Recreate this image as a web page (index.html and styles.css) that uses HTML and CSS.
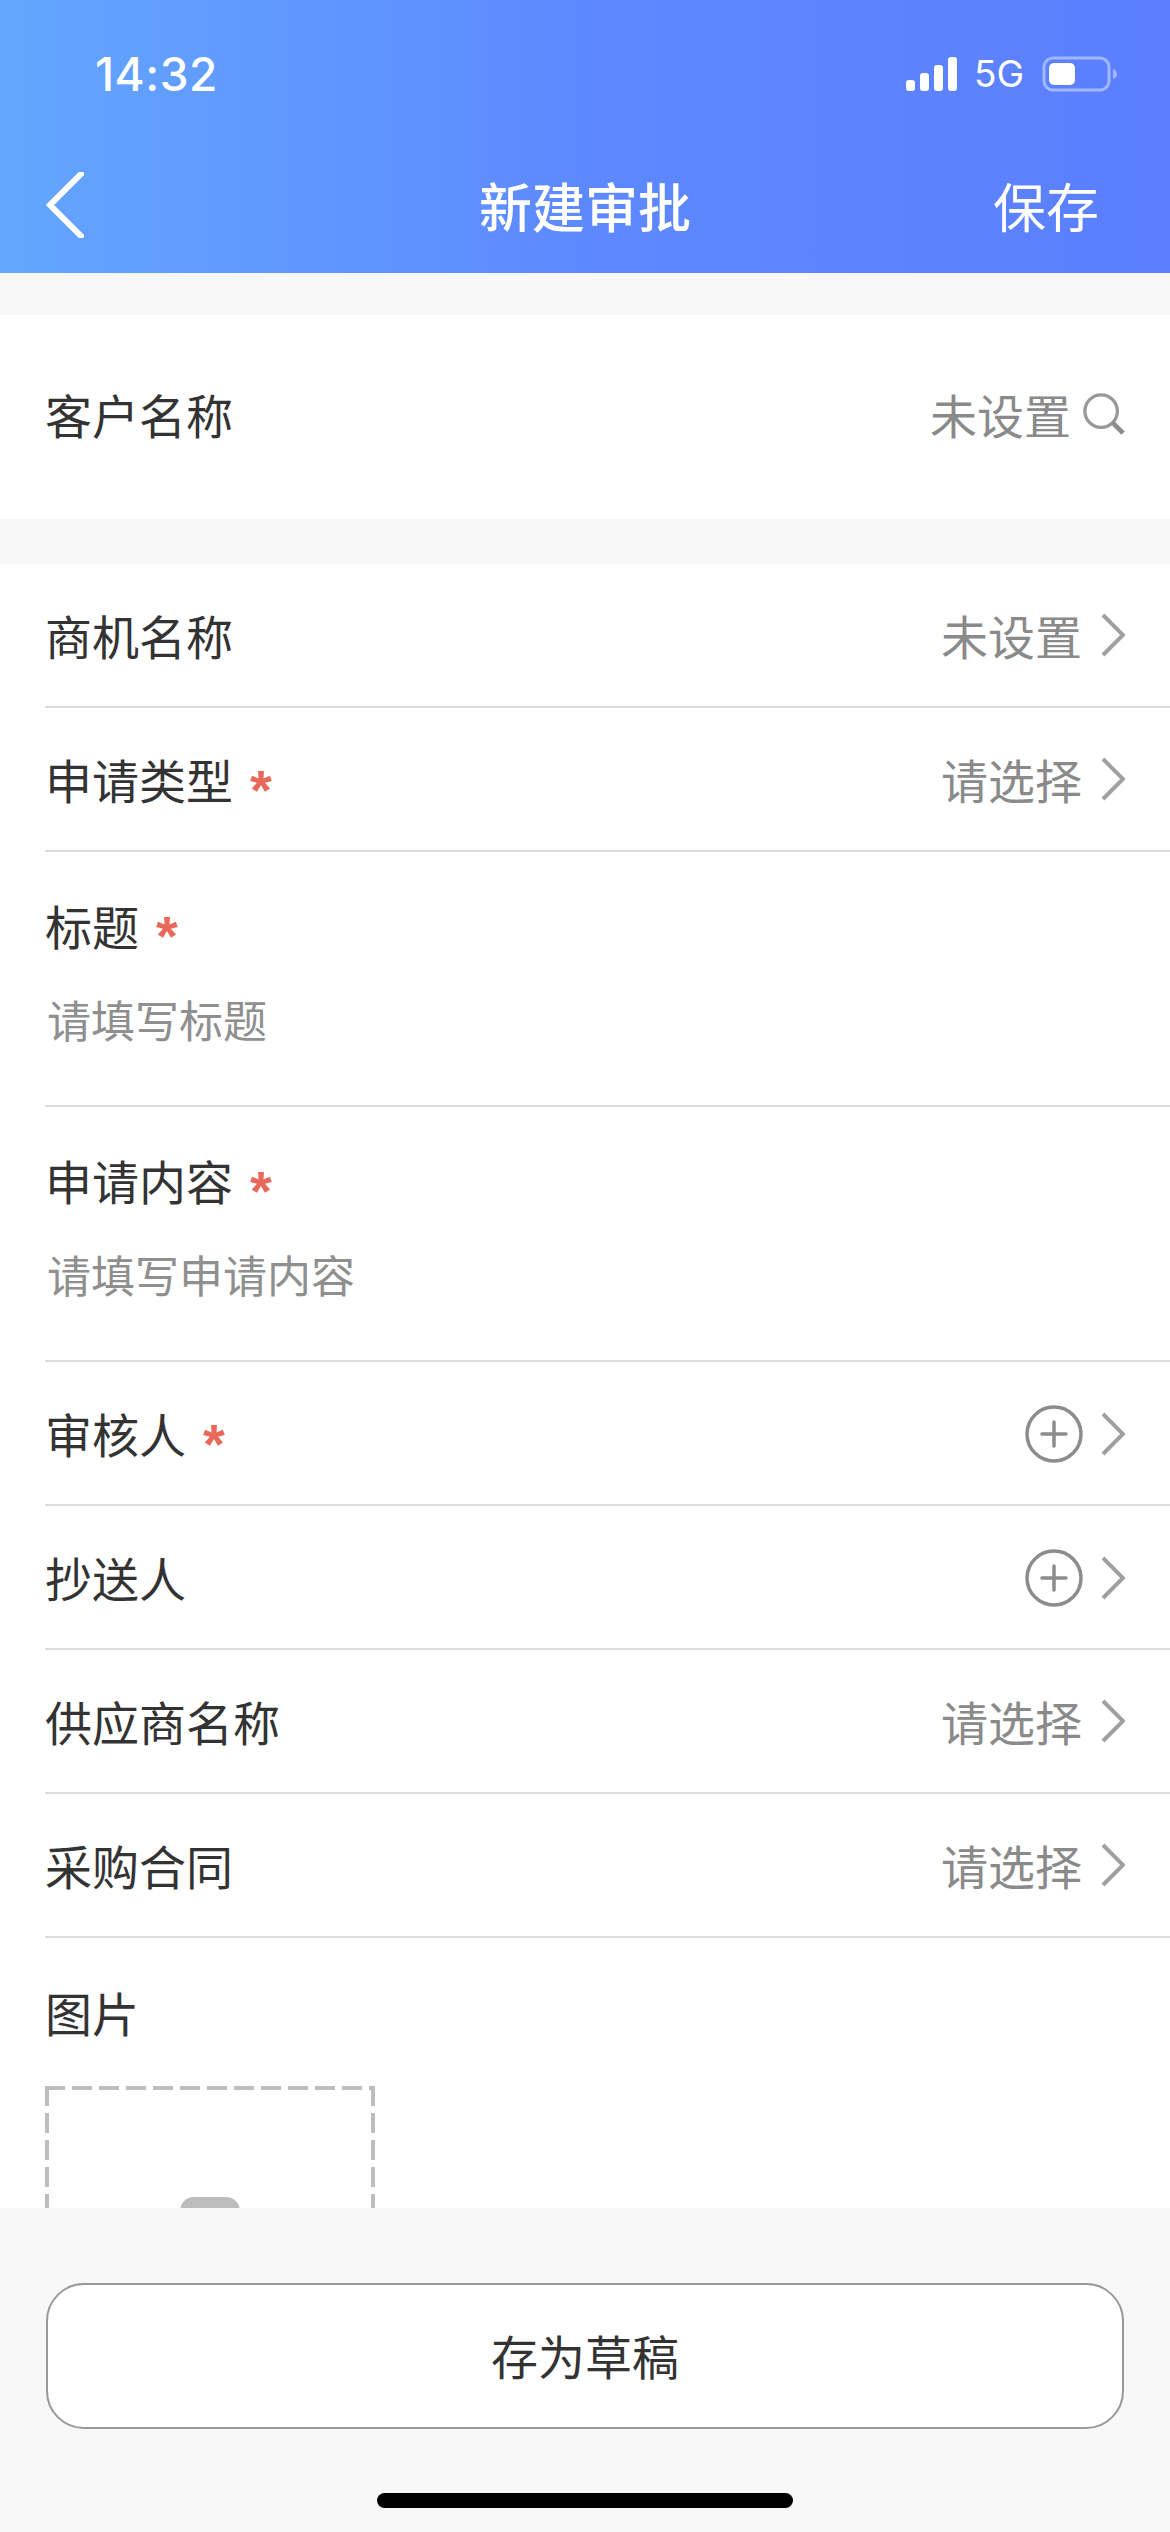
FILE: index.html
```html
<!DOCTYPE html>
<html lang="zh">
<head>
<meta charset="utf-8">
<title>新建审批</title>
<link rel="stylesheet" href="styles.css">
</head>
<body>
<div class="app">
  <header class="header">
    <div class="status">
      <span class="time">14:32</span>
      <div class="status-icons">
        <svg class="signal" width="52" height="34" viewBox="0 0 52 34"><rect x="0" y="23" width="9" height="11" rx="3"/><rect x="14" y="16" width="9" height="18" rx="3"/><rect x="28" y="8" width="9" height="26" rx="3"/><rect x="42" y="0" width="9" height="34" rx="3"/></svg>
        <span class="net">5G</span>
        <svg class="battery" width="76" height="36" viewBox="0 0 76 36"><rect x="2" y="2" width="65" height="32" rx="9" fill="none" stroke="#a0b8ff" stroke-width="3"/><rect x="7" y="7" width="26" height="22" rx="5" fill="#fff"/><path d="M71 13c3 1 4 3 4 5s-1 4-4 5z" fill="#a0b8ff"/></svg>
      </div>
    </div>
    <nav class="nav">
      <svg class="back" width="38" height="66" viewBox="0 0 38 66"><path d="M35 2L4 33l31 31" fill="none" stroke="#fff" stroke-width="6" stroke-linecap="round" stroke-linejoin="miter"/></svg>
      <h1 class="title">新建审批</h1>
      <span class="save">保存</span>
    </nav>
  </header>

  <main class="scroll">
    <section class="card card-customer">
      <div class="row row-customer">
        <span class="label">客户名称</span>
        <span class="value">未设置</span>
        <svg class="search" width="42" height="42" viewBox="0 0 44 44"><circle cx="19" cy="19" r="17" fill="none" stroke="#999" stroke-width="3.5"/><path d="M31 31l11 11" stroke="#8c8c8c" stroke-width="5"/></svg>
      </div>
    </section>
    <section class="card">
      <div class="row">
        <span class="label">商机名称</span>
        <span class="value">未设置</span>
        <svg class="chev" width="24" height="44" viewBox="0 0 24 44"><path d="M2 2l20 20L2 42" fill="none" stroke="#a0a0a0" stroke-width="4"/></svg>
      </div>
      <div class="row">
        <span class="label">申请类型<i class="star">*</i></span>
        <span class="value">请选择</span>
        <svg class="chev" width="24" height="44" viewBox="0 0 24 44"><path d="M2 2l20 20L2 42" fill="none" stroke="#a0a0a0" stroke-width="4"/></svg>
      </div>
      <div class="stack">
        <span class="label">标题<i class="star">*</i></span>
        <span class="hint">请填写标题</span>
      </div>
      <div class="stack">
        <span class="label">申请内容<i class="star">*</i></span>
        <span class="hint">请填写申请内容</span>
      </div>
      <div class="row">
        <span class="label">审核人<i class="star">*</i></span>
        <span class="spacer"></span>
        <svg class="plus" width="58" height="58" viewBox="0 0 58 58"><circle cx="29" cy="29" r="27" fill="none" stroke="#8c8c8c" stroke-width="3.5"/><path d="M29 17v24M17 29h24" stroke="#8c8c8c" stroke-width="3.5" stroke-linecap="round"/></svg>
        <svg class="chev" width="24" height="44" viewBox="0 0 24 44"><path d="M2 2l20 20L2 42" fill="none" stroke="#a0a0a0" stroke-width="4"/></svg>
      </div>
      <div class="row">
        <span class="label">抄送人</span>
        <span class="spacer"></span>
        <svg class="plus" width="58" height="58" viewBox="0 0 58 58"><circle cx="29" cy="29" r="27" fill="none" stroke="#8c8c8c" stroke-width="3.5"/><path d="M29 17v24M17 29h24" stroke="#8c8c8c" stroke-width="3.5" stroke-linecap="round"/></svg>
        <svg class="chev" width="24" height="44" viewBox="0 0 24 44"><path d="M2 2l20 20L2 42" fill="none" stroke="#a0a0a0" stroke-width="4"/></svg>
      </div>
      <div class="row">
        <span class="label">供应商名称</span>
        <span class="value">请选择</span>
        <svg class="chev" width="24" height="44" viewBox="0 0 24 44"><path d="M2 2l20 20L2 42" fill="none" stroke="#a0a0a0" stroke-width="4"/></svg>
      </div>
      <div class="row">
        <span class="label">采购合同</span>
        <span class="value">请选择</span>
        <svg class="chev" width="24" height="44" viewBox="0 0 24 44"><path d="M2 2l20 20L2 42" fill="none" stroke="#a0a0a0" stroke-width="4"/></svg>
      </div>
      <div class="images">
        <span class="label">图片</span>
        <div class="upload"><span class="upload-icon"></span></div>
      </div>
    </section>
  </main>

  <footer class="footer">
    <button class="draft">存为草稿</button>
    <div class="home"></div>
  </footer>
</div>
</body>
</html>
```

FILE: styles.css
```css
* { box-sizing: border-box; }
html, body { margin: 0; padding: 0; }
body {
  width: 1170px;
  height: 2532px;
  overflow: hidden;
  background: #f8f8f8;
  font-family: "Noto Sans CJK SC", "Liberation Sans", sans-serif;
  color: #333;
}
.app { height: 2532px; display: flex; flex-direction: column; }

.header {
  height: 273px;
  flex: none;
  display: flex;
  flex-direction: column;
  background: linear-gradient(90deg, #63a6ff 0%, #5d88ff 52%, #5b7fff 100%);
  color: #fff;
}
.status {
  height: 150px;
  padding: 56px 52px 0 95px;
  display: flex;
  justify-content: space-between;
  align-items: flex-start;
}
.time {
  font-family: Inter, "Liberation Sans", sans-serif;
  font-size: 46px;
  font-weight: 500;
  line-height: 36px;
  letter-spacing: 0.5px;
}
.status-icons { display: flex; align-items: center; gap: 16px; height: 36px; }
.signal { fill: #fff; }
.net {
  font-family: Inter, "Liberation Sans", sans-serif;
  font-size: 37px;
  line-height: 36px;
}
.battery { margin-left: 2px; }

.nav {
  position: relative;
  flex: 1;
  display: flex;
  align-items: flex-start;
  justify-content: space-between;
  padding: 22px 71px 0 46px;
}
.back { display: block; }
.title {
  margin: 0;
  position: absolute;
  left: 0;
  right: 0;
  top: 20px;
  text-align: center;
  font-size: 53px;
  font-weight: 500;
  line-height: 70px;
  pointer-events: none;
}
.save { margin-top: -2px; font-size: 53px; line-height: 70px; }

.scroll { flex: 1; min-height: 0; overflow: hidden; padding-top: 42px; }
.card { background: #fff; }
.card-customer { margin-bottom: 45px; }

.row {
  height: 144px;
  margin-left: 45px;
  padding-right: 45px;
  display: flex;
  align-items: center;
  border-bottom: 2px solid #dcdcdc;
}
.row-customer { height: 204px; border-bottom: 0; padding-bottom: 6px; }
.label { font-size: 47px; line-height: 64px; margin-right: auto; color: #333; }
.star {
  font-style: normal;
  font-family: "Liberation Sans", sans-serif;
  font-weight: 700;
  color: #e8685a;
  margin-left: 17px;
  font-size: 56px;
  line-height: 0;
  vertical-align: -10px;
}
.value { font-size: 47px; line-height: 64px; color: #8a8a8a; }
.spacer { flex: 1; }
.chev { margin-left: 19px; flex: none; }
.search { margin-left: 12px; flex: none; }
.plus { flex: none; margin-top: 2px; }
.plus + .chev { margin-left: 18px; margin-top: 2px; }

.stack {
  height: 255px;
  margin-left: 45px;
  padding-top: 41px;
  display: flex;
  flex-direction: column;
  gap: 30px;
  border-bottom: 2px solid #dcdcdc;
}
.hint { font-size: 44px; line-height: 64px; color: #8f8f8f; padding-left: 2px; }

.images { padding: 42px 0 0 45px; }
.images .label { display: block; }
.upload {
  margin-top: 42px;
  width: 330px;
  height: 330px;
  background:
    repeating-linear-gradient(90deg, #bdbdbd 0 20px, transparent 20px 27px) left top / 100% 4px no-repeat,
    repeating-linear-gradient(180deg, #bdbdbd 0 20px, transparent 20px 27px) left top / 4px 100% no-repeat,
    repeating-linear-gradient(180deg, #bdbdbd 0 20px, transparent 20px 27px) right top / 4px 100% no-repeat;
  display: flex;
  justify-content: center;
  padding-top: 111px;
}
.upload-icon {
  display: block;
  width: 60px;
  height: 60px;
  background: #bdbdbd;
  border-radius: 14px 14px 0 0;
}

.footer {
  height: 324px;
  flex: none;
  background: #f8f8f8;
  padding: 75px 46px 0;
  display: flex;
  flex-direction: column;
  align-items: center;
  position: relative;
}
.draft {
  width: 100%;
  height: 146px;
  padding: 0 0 3px;
  background: #fff;
  border: 2px solid #999;
  border-radius: 38px;
  font-family: inherit;
  font-size: 47px;
  color: #333;
}
.home {
  margin-top: 64px;
  width: 416px;
  height: 15px;
  border-radius: 8px;
  background: #000;
}
```
